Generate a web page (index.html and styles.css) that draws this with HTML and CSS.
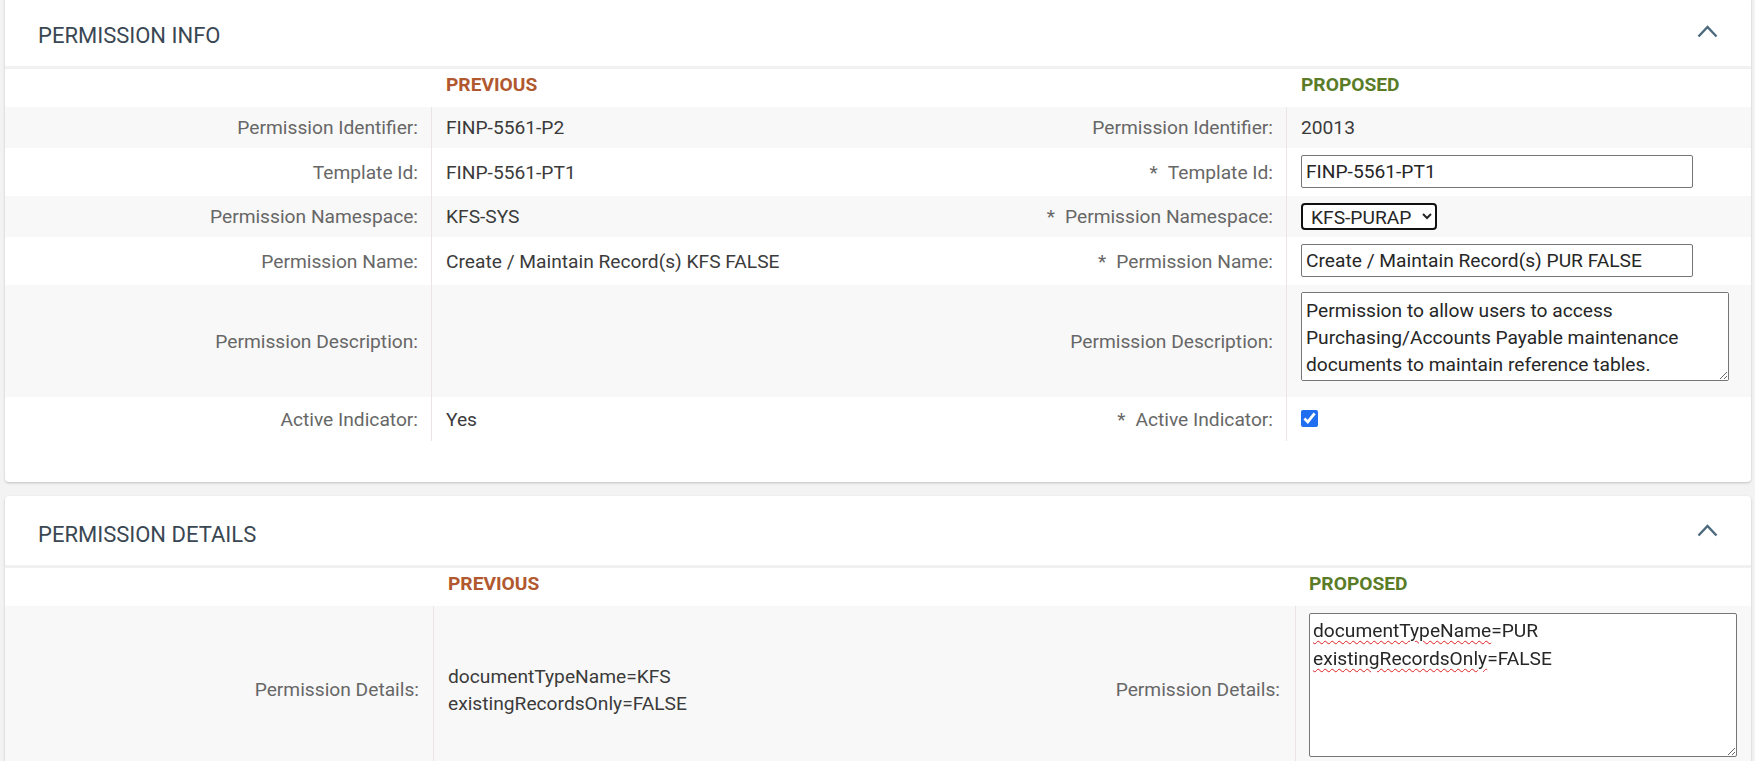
FILE: index.html
```html
<!DOCTYPE html>
<html lang="en">
<head>
<meta charset="utf-8">
<title>Permission Maintenance</title>
<link rel="stylesheet" href="styles.css">
</head>
<body>
<div class="page">
  <section class="card card-info">
    <header class="card-head">
      <h2 class="card-title">PERMISSION INFO</h2>
      <button class="collapse" type="button" aria-label="Collapse">
        <svg width="21" height="14" viewBox="0 0 21 14"><polyline points="1.5,12.5 10.5,3 19.5,12.5" fill="none" stroke="#4c6a7e" stroke-width="2.4"/></svg>
      </button>
    </header>
    <div class="compare cols-info">
      <div class="row head">
        <div class="cell"></div>
        <div class="cell col-head prev">PREVIOUS</div>
        <div class="cell"></div>
        <div class="cell col-head prop">PROPOSED</div>
      </div>
      <div class="row alt">
        <div class="cell label">Permission Identifier:</div>
        <div class="cell value">FINP-5561-P2</div>
        <div class="cell label">Permission Identifier:</div>
        <div class="cell value">20013</div>
      </div>
      <div class="row">
        <div class="cell label">Template Id:</div>
        <div class="cell value">FINP-5561-PT1</div>
        <div class="cell label"><span class="req">*</span>Template Id:</div>
        <div class="cell value field-cell"><input class="field" type="text" value="FINP-5561-PT1"></div>
      </div>
      <div class="row alt">
        <div class="cell label">Permission Namespace:</div>
        <div class="cell value">KFS-SYS</div>
        <div class="cell label"><span class="req">*</span>Permission Namespace:</div>
        <div class="cell value select-cell">
          <select class="select"><option>KFS-PURAP</option></select>
        </div>
      </div>
      <div class="row">
        <div class="cell label">Permission Name:</div>
        <div class="cell value">Create / Maintain Record(s) KFS FALSE</div>
        <div class="cell label"><span class="req">*</span>Permission Name:</div>
        <div class="cell value field-cell"><input class="field" type="text" value="Create / Maintain Record(s) PUR FALSE"></div>
      </div>
      <div class="row alt">
        <div class="cell label">Permission Description:</div>
        <div class="cell value"></div>
        <div class="cell label">Permission Description:</div>
        <div class="cell value area-cell"><textarea class="area area-desc">Permission to allow users to access Purchasing/Accounts Payable maintenance documents to maintain reference tables.</textarea></div>
      </div>
      <div class="row">
        <div class="cell label">Active Indicator:</div>
        <div class="cell value">Yes</div>
        <div class="cell label"><span class="req">*</span>Active Indicator:</div>
        <div class="cell value check-cell"><input class="check" type="checkbox" checked></div>
      </div>
    </div>
  </section>

  <section class="card card-details">
    <header class="card-head">
      <h2 class="card-title">PERMISSION DETAILS</h2>
      <button class="collapse" type="button" aria-label="Collapse">
        <svg width="21" height="14" viewBox="0 0 21 14"><polyline points="1.5,12.5 10.5,3 19.5,12.5" fill="none" stroke="#4c6a7e" stroke-width="2.4"/></svg>
      </button>
    </header>
    <div class="compare cols-details">
      <div class="row head">
        <div class="cell"></div>
        <div class="cell col-head prev">PREVIOUS</div>
        <div class="cell"></div>
        <div class="cell col-head prop">PROPOSED</div>
      </div>
      <div class="row alt">
        <div class="cell label">Permission Details:</div>
        <div class="cell value multi">documentTypeName=KFS<br>existingRecordsOnly=FALSE</div>
        <div class="cell label">Permission Details:</div>
        <div class="cell value area-cell">
          <div class="area area-details" role="textbox" aria-multiline="true"><span class="spell">documentTypeName</span>=PUR<br><span class="spell">existingRecordsOnly</span>=FALSE</div>
        </div>
      </div>
    </div>
  </section>
</div>
</body>
</html>
```

FILE: styles.css
```css
html, body {
  margin: 0;
  background: #f3f3f3;
}

body {
  font-family: Roboto, "Liberation Sans", Arial, sans-serif;
  font-size: 19.2px;
  line-height: 27px;
  color: #3d3d3d;
}

.page {
  display: flex;
  flex-direction: column;
  gap: 14px;
  padding: 0 4px 0 5px;
  margin-top: -3px;
}

.card {
  background: #ffffff;
  border-radius: 4px;
  box-shadow: 0 1px 3px rgba(0, 0, 0, 0.16), 0 1px 2px rgba(0, 0, 0, 0.06);
}

.card-info {
  padding-bottom: 41px;
}

.card-head {
  box-sizing: border-box;
  height: 72px;
  padding: 7px 33px 0 33px;
  display: flex;
  align-items: center;
  justify-content: space-between;
  border-bottom: 3px solid #f1f1f1;
}

.card-title {
  margin: 0;
  font-size: 22px;
  font-weight: 400;
  line-height: 27px;
  color: #3a4753;
}

.collapse {
  border: 0;
  background: none;
  padding: 0;
  margin: 0 0 8px 0;
  width: 21px;
  height: 14px;
  display: flex;
  cursor: pointer;
}

.row {
  display: grid;
}

.cols-info .row {
  grid-template-columns: 427px 427px 428px 1fr;
}

.cols-details .row {
  grid-template-columns: 429px 431px 431px 1fr;
}

.row.alt {
  background: #f8f8f8;
}

.cell {
  box-sizing: border-box;
  display: flex;
  align-items: center;
  padding: 7px 14px;
  min-width: 0;
}

.cell.label {
  justify-content: flex-end;
  text-align: right;
  color: #676767;
  padding-right: 13px;
  white-space: nowrap;
}

.cols-details .cell.label {
  padding-right: 14px;
}

.row:not(.head) .cell:nth-child(1),
.row:not(.head) .cell:nth-child(3) {
  border-right: 1px solid #ebe4e4;
}

.cols-details .row:not(.head) .cell:nth-child(3) {
  padding-right: 15px;
}

.cols-details .cell:nth-child(4) {
  padding-left: 13px;
}

.row.head .cell {
  padding-top: 2px;
  padding-bottom: 9px;
}

.col-head {
  font-weight: 700;
}

.prev {
  color: #b1582f;
}

.prop {
  color: #5a7c28;
}

.value {
  color: #3b3b3b;
}

.value.multi {
  line-height: 27px;
}

.req {
  margin-right: 10px;
}

.field-cell {
  padding-bottom: 8px;
}

.field {
  box-sizing: border-box;
  width: 392px;
  height: 33px;
  margin: 0;
  padding: 0 4px;
  border: 1px solid #767676;
  border-radius: 2px;
  font: inherit;
  line-height: normal;
  color: #262626;
  background: #fff;
}

.select {
  box-sizing: border-box;
  width: 136px;
  height: 27px;
  margin: 0;
  padding: 0 2px 0 4px;
  border: 2px solid #111111;
  border-radius: 4px;
  font: inherit;
  line-height: normal;
  color: #262626;
  background: #fff;
  outline: none;
}

.area-cell {
  align-items: flex-start;
}

.area {
  box-sizing: border-box;
  display: block;
  margin: 0 0 9px 0;
  border: 1px solid #767676;
  border-radius: 2px;
  background: #fff;
  font: inherit;
  color: #262626;
  resize: both;
  overflow: auto;
}

.area-desc {
  width: 428px;
  height: 89px;
  padding: 4px 4px;
  line-height: 27px;
}

.area-details {
  width: 428px;
  height: 144px;
  padding: 3px 3px;
  line-height: 28px;
}

.spell {
  text-decoration: underline wavy #dd2222;
  text-decoration-thickness: 1px;
  text-underline-offset: 3px;
}

.check-cell {
  padding-top: 13px;
  padding-bottom: 14px;
}

.check {
  width: 17px;
  height: 17px;
  margin: 0;
  accent-color: #1f6ff0;
}
```
